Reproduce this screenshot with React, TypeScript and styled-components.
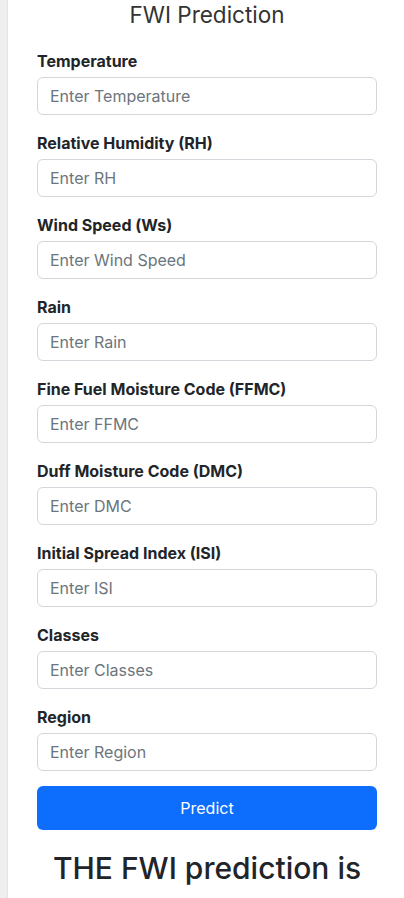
import React from "react";
import styled, { createGlobalStyle } from "styled-components";

const Global = createGlobalStyle`
  html, body { margin: 0; padding: 0; }
  body {
    background: #efefef;
    font-family: Inter, "Liberation Sans", Arial, sans-serif;
    color: #212529;
    overflow: hidden;
  }
  * { box-sizing: border-box; }
`;

const Card = styled.div`
  margin-left: 7px;
  width: 397px;
  min-height: 898px;
  background: #fff;
  border-left: 1px solid #e4e4e4;
  padding: 0 27px 0 29px;
`;

const Title = styled.h3`
  margin: 0 0 20px;
  font-size: 22.5px;
  font-weight: 400;
  line-height: 29px;
  color: #333;
  text-align: center;
`;

const Group = styled.div`
  display: flex;
  flex-direction: column;
  margin-bottom: 16px;
`;

const Label = styled.label`
  font-size: 16px;
  font-weight: 700;
  line-height: 24px;
  margin-bottom: 4px;
  color: #212529;
`;

const Input = styled.input`
  height: 38px;
  width: 100%;
  padding: 6px 12px;
  font-size: 16px;
  font-family: inherit;
  color: #212529;
  border: 1px solid #d3d7dc;
  border-radius: 6px;
  background: #fff;
  outline: none;
  &::placeholder { color: #6c757d; }
`;

const Button = styled.button`
  width: 100%;
  height: 44px;
  border: none;
  border-radius: 6px;
  background: #0d6efd;
  color: #fff;
  font-family: inherit;
  font-size: 16px;
  margin-top: -1px;
`;

const Result = styled.h2`
  margin: 19px 0 0;
  font-size: 30px;
  font-weight: 500;
  line-height: 38px;
  text-align: center;
  color: #212529;
`;

const fields: [string, string][] = [
  ["Temperature", "Enter Temperature"],
  ["Relative Humidity (RH)", "Enter RH"],
  ["Wind Speed (Ws)", "Enter Wind Speed"],
  ["Rain", "Enter Rain"],
  ["Fine Fuel Moisture Code (FFMC)", "Enter FFMC"],
  ["Duff Moisture Code (DMC)", "Enter DMC"],
  ["Initial Spread Index (ISI)", "Enter ISI"],
  ["Classes", "Enter Classes"],
  ["Region", "Enter Region"],
];

export default function App() {
  return (
    <>
      <Global />
      <Card>
        <Title>FWI Prediction</Title>
        <form onSubmit={(e) => e.preventDefault()}>
          {fields.map(([label, ph]) => (
            <Group key={label}>
              <Label>{label}</Label>
              <Input type="text" placeholder={ph} />
            </Group>
          ))}
          <Button type="submit">Predict</Button>
        </form>
        <Result>THE FWI prediction is</Result>
      </Card>
    </>
  );
}
